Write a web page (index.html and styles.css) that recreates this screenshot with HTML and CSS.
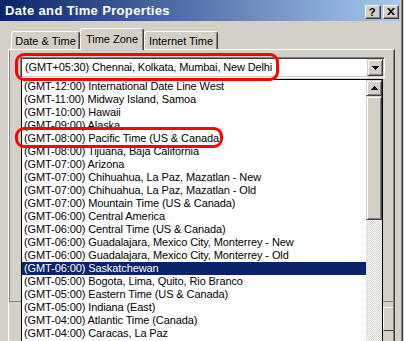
FILE: index.html
```html
<!DOCTYPE html>
<html>
<head>
<meta charset="utf-8">
<link rel="stylesheet" href="styles.css">
</head>
<body>
<div class="window">
  <div class="titlebar">
    <span class="title">Date and Time Properties</span>
    <div class="tbtns">
      <span class="tbtn help">?</span>
      <span class="tbtn close"><svg width="8" height="7" viewBox="0 0 8 7"><path d="M0 0h2l2 2.3L6 0h2L5 3.5 8 7H6L4 4.7 2 7H0l3-3.5z" fill="#000"/></svg></span>
    </div>
  </div>
  <div class="tabs">
    <div class="tab tab-date">Date &amp; Time</div>
    <div class="tab tab-zone active">Time Zone</div>
    <div class="tab tab-net">Internet Time</div>
  </div>
  <div class="panel">
    <div class="frame">
      <div class="combo">
        <span class="combo-text">(GMT+05:30) Chennai, Kolkata, Mumbai, New Delhi</span>
        <span class="sbtn combo-btn"><svg width="7" height="4" viewBox="0 0 7 4"><rect x="0" y="0" width="7" height="1"/><rect x="1" y="1" width="5" height="1"/><rect x="2" y="2" width="3" height="1"/><rect x="3" y="3" width="1" height="1"/></svg></span>
      </div>
    </div>
    <div class="sidebtn"></div>
    <div class="dropdown">
      <ul class="rows">
        <li>(GMT-12:00) International Date Line West</li>
        <li>(GMT-11:00) Midway Island, Samoa</li>
        <li>(GMT-10:00) Hawaii</li>
        <li>(GMT-09:00) Alaska</li>
        <li>(GMT-08:00) Pacific Time (US &amp; Canada)</li>
        <li>(GMT-08:00) Tijuana, Baja California</li>
        <li>(GMT-07:00) Arizona</li>
        <li>(GMT-07:00) Chihuahua, La Paz, Mazatlan - New</li>
        <li>(GMT-07:00) Chihuahua, La Paz, Mazatlan - Old</li>
        <li>(GMT-07:00) Mountain Time (US &amp; Canada)</li>
        <li>(GMT-06:00) Central America</li>
        <li>(GMT-06:00) Central Time (US &amp; Canada)</li>
        <li>(GMT-06:00) Guadalajara, Mexico City, Monterrey - New</li>
        <li>(GMT-06:00) Guadalajara, Mexico City, Monterrey - Old</li>
        <li class="selected">(GMT-06:00) Saskatchewan</li>
        <li>(GMT-05:00) Bogota, Lima, Quito, Rio Branco</li>
        <li>(GMT-05:00) Eastern Time (US &amp; Canada)</li>
        <li>(GMT-05:00) Indiana (East)</li>
        <li>(GMT-04:00) Atlantic Time (Canada)</li>
        <li>(GMT-04:00) Caracas, La Paz</li>
      </ul>
      <div class="vscroll">
        <span class="sbtn up-btn"><svg width="7" height="4" viewBox="0 0 7 4"><rect x="3" y="0" width="1" height="1"/><rect x="2" y="1" width="3" height="1"/><rect x="1" y="2" width="5" height="1"/><rect x="0" y="3" width="7" height="1"/></svg></span>
        <span class="thumb"></span>
        <span class="track"></span>
      </div>
    </div>
  </div>
  <div class="mark mark-combo"></div>
  <div class="mark mark-pacific"></div>
</div>
</body>
</html>
```

FILE: styles.css
```css
html, body {
  margin: 0;
  padding: 0;
  background: #d4d0c8;
  overflow: hidden;
}

body {
  font-family: "Liberation Sans", Arial, sans-serif;
  font-size: 11px;
  color: #000;
}

.window {
  position: relative;
  width: 403px;
  height: 341px;
  box-sizing: border-box;
  border-right: 1px solid #404040;
  box-shadow: inset -1px 0 #808080;
  background: #d4d0c8;
  overflow: hidden;
}

.titlebar {
  height: 21px;
  margin-right: 2px;
  background: linear-gradient(to right, #0a246a, #a6caf0);
  display: flex;
  justify-content: space-between;
  align-items: flex-start;
}

.title {
  color: #fff;
  font-weight: bold;
  font-size: 13px;
  letter-spacing: 0.35px;
  line-height: 21px;
  padding-left: 5px;
  white-space: nowrap;
}

.tbtns {
  display: flex;
  gap: 2px;
  margin-top: 5px;
  margin-right: 1px;
}

.tbtn {
  width: 16px;
  height: 14px;
  box-sizing: border-box;
  background: #d4d0c8;
  border: 1px solid;
  border-color: #fff #404040 #404040 #fff;
  box-shadow: inset -1px -1px #808080;
  display: flex;
  align-items: center;
  justify-content: center;
}

.help {
  font-weight: bold;
  font-size: 11px;
  line-height: 11px;
  padding-right: 2px;
  padding-top: 1px;
}

.close svg {
  display: block;
  margin-top: -1px;
}

/* tabs */
.tabs {
  display: flex;
  align-items: flex-end;
  height: 21px;
  margin: 7px 0 0 11px;
}

.tab {
  box-sizing: border-box;
  height: 18px;
  border-top: 1px solid #fff;
  border-left: 1px solid #fff;
  border-right: 1px solid #404040;
  border-radius: 3px 3px 0 0;
  box-shadow: inset -1px 0 #808080;
  display: flex;
  align-items: center;
  justify-content: center;
  white-space: nowrap;
  background: #d4d0c8;
}

.tab-date { width: 69px; }
.tab-zone { width: 64px; }
.tab-net { width: 74px; }

.tab.active {
  position: relative;
  z-index: 1;
  height: 22px;
  margin-bottom: -1px;
  padding-bottom: 2px;
}

/* panel */
.panel {
  position: relative;
  margin-left: 8px;
  width: 387px;
  height: 300px;
  box-sizing: border-box;
  border-top: 1px solid #fff;
  border-left: 1px solid #fff;
  border-right: 1px solid #404040;
  box-shadow: inset -1px 0 #808080;
}

.frame {
  width: 384px;
  height: 252px;
  box-sizing: border-box;
  border-left: 1px solid #808080;
  border-bottom: 1px solid #808080;
  padding-top: 7px;
  padding-left: 10px;
}

.combo {
  width: 365px;
  height: 21px;
  box-sizing: border-box;
  border: 1px solid;
  border-color: #808080 #fff #fff #808080;
  box-shadow: inset 1px 1px #404040, inset -1px -1px #d4d0c8;
  background: #fff;
  display: flex;
  align-items: stretch;
  padding: 1px;
}

.combo-text {
  flex: 1;
  padding-left: 3px;
  line-height: 17px;
  letter-spacing: -0.15px;
  white-space: nowrap;
}

.sbtn {
  width: 16px;
  box-sizing: border-box;
  background: #d4d0c8;
  border: 1px solid;
  border-color: #d4d0c8 #404040 #404040 #d4d0c8;
  box-shadow: inset 1px 1px #fff, inset -1px -1px #808080;
  display: flex;
  align-items: center;
  justify-content: center;
}

.combo-btn {
  height: 17px;
}

.sbtn svg {
  display: block;
  fill: #000;
}

.sidebtn {
  margin: 5px 0 0 374px;
  width: 10px;
  height: 24px;
  box-sizing: border-box;
  border-top: 1px solid #fff;
  border-left: 1px solid #fff;
  border-bottom: 1px solid #404040;
}

/* dropdown list */
.dropdown {
  position: absolute;
  left: 12px;
  top: 29px;
  z-index: 2;
  width: 362px;
  height: 280px;
  box-sizing: border-box;
  border: 1px solid #000;
  background: #fff;
  display: flex;
}

.rows {
  list-style: none;
  margin: 0;
  padding: 0;
  width: 344px;
}

.rows li {
  height: 13px;
  line-height: 13px;
  padding-left: 2px;
  letter-spacing: -0.1px;
  white-space: nowrap;
  overflow: hidden;
}

.rows li.selected {
  background: #0a246a;
  color: #fff;
}

.vscroll {
  width: 16px;
  display: flex;
  flex-direction: column;
}

.up-btn {
  height: 16px;
  flex: none;
}

.thumb {
  height: 124px;
  flex: none;
  box-sizing: border-box;
  background: #d4d0c8;
  border: 1px solid;
  border-color: #d4d0c8 #404040 #404040 #d4d0c8;
  box-shadow: inset 1px 1px #fff, inset -1px -1px #808080;
}

.track {
  flex: 1;
  background: repeating-conic-gradient(#fff 0 25%, #d4d0c8 0 50%) 0 0 / 2px 2px;
}

/* annotation marks */
.mark {
  position: absolute;
  z-index: 5;
  box-sizing: border-box;
  border: 3px solid #ff0000;
  border-radius: 9px;
}

.mark-combo {
  left: 15px;
  top: 53px;
  width: 264px;
  height: 28px;
}

.mark-pacific {
  left: 15px;
  top: 127px;
  width: 208px;
  height: 21px;
}
```
